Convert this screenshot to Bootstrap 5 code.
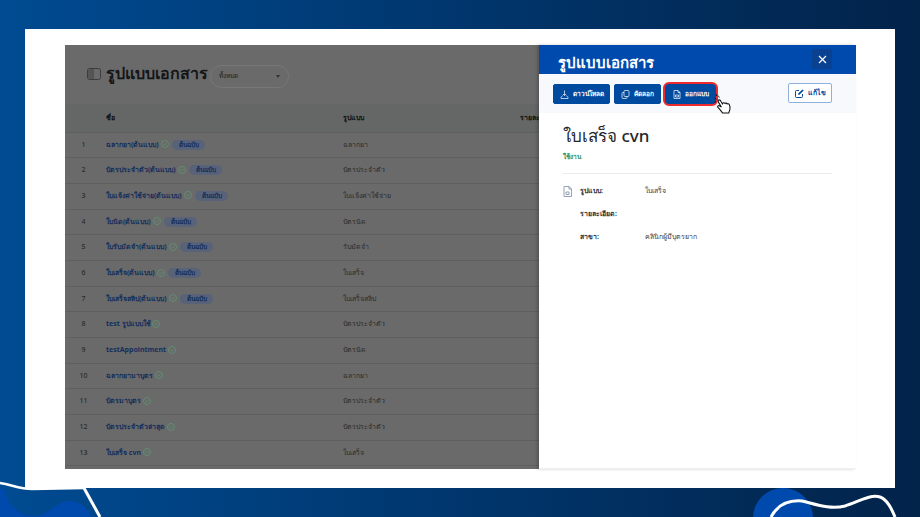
<!DOCTYPE html>
<html lang="th">
<head>
    <meta charset="UTF-8">
    <meta name="viewport" content="width=device-width, initial-scale=1">
    <title>รูปแบบเอกสาร</title>
    <link href="https://cdn.jsdelivr.net/npm/bootstrap@5.3.0/dist/css/bootstrap.min.css" rel="stylesheet">
    <style>
        html, body { height: 517px; overflow: hidden; }
        body {
            position: relative;
            padding: 29px 25px;
            font-family: "Noto Sans", Inter, "Liberation Sans", sans-serif;
            background: linear-gradient(to right, #004b92, #003a74 40%, #02234a);
        }
        .deco { position: absolute; left: 0; top: 0; }
        .sheet { position: relative; height: 459px; background: #fff; padding: 16px 39px 19px 40px; }
        .shot { height: 424px; }

        /* lista de fondo, oscurecida */
        .list-side { flex: 1 1 0; min-width: 0; overflow: hidden; background: #6a6a6a; }
        .list-head { height: 59px; padding: 0 0 1px 22px; gap: 5px; }
        .list-title { font-size: 16px; font-weight: 700; color: #141518; margin: 0; }
        .filter-box {
            width: 79px; height: 23px; padding: 0 8px; margin-top: 4px; margin-left: -3px;
            border: 1px solid #777; border-radius: 12px;
            font-size: 6.5px; color: #222;
        }
        .filter-caret { border: 2.5px solid transparent; border-top: 3px solid #333; border-bottom: 0; }
        .doc-table { table-layout: fixed; width: 791px; margin: 0; font-size: 7px; font-weight: 500; }
        .doc-table > * > tr > * { background: transparent; padding: 0; vertical-align: middle; border-color: #5f5f5f; color: #2a2a2a; box-shadow: none; }
        .doc-table thead th { height: 28px; background: #646765; font-weight: 700; color: #111; }
        .doc-table tbody td { height: 25.7px; }
        .doc-table tbody td.doc-name-cell { white-space: nowrap; }
        .doc-name { color: #152f5c; font-weight: 700; }
        .doc-check { width: 8px; height: 8px; margin: 0 2px 0 0; vertical-align: -1.500px; }
        .doc-badge { display: inline-block; width: 33px; line-height: 10px; border-radius: 5px; background: #586379; color: #152f5c; font-size: 6.5px; font-weight: 700; text-align: center; }

        /* panel derecho */
        .drawer { flex: 0 0 317px; background: #fff; border-bottom: 1px solid #eef0f4; box-shadow: -2px 0 3px rgba(0,0,0,.2); position: relative; }
        .drawer-top { height: 29px; background: #004aad; padding: 0 24px 0 19px; }
        .drawer-title { font-size: 15px; font-weight: 600; color: #fff; margin: 5px 0 0; }
        .drawer-close { width: 20px; height: 20px; background: #0a4191; border-radius: 2px; margin-top: -1px; }
        .drawer-tools { height: 39px; background: #f7f9fc; padding: 0 24px 0 14px; }
        .tool-btn {
            height: 20px; padding: 0; gap: 4px;
            background: #004a9f; border: 1px solid #004a9f; border-radius: 2px;
            color: #fff; font-size: 6.5px; font-weight: 700; line-height: 1;
        }
        .tool-download { width: 57px; }
        .tool-copy { width: 47px; }
        .tool-export { position: relative; width: 51px; }
        .tool-export::after { content: ""; position: absolute; inset: -3px; border: 2px solid #ee2a2e; border-radius: 6px; }
        .tool-gap { gap: 4px; margin-top: 1px; }
        .tool-edit { height: 20px; width: 44px; padding: 0; gap: 4px; background: #fff; border: 1px solid #8fb0dd; border-radius: 2px; color: #004a9f; font-size: 7px; font-weight: 700; margin-top: -1px; }
        .hand { position: absolute; left: 47px; top: 9px; width: 21px; height: 21px; z-index: 3; }
        .drawer-body { padding: 12px 24px 0; }
        .doc-title { font-size: 17px; font-weight: 500; color: #24272b; margin: 0; line-height: 22px; }
        .doc-state { font-size: 6.5px; font-weight: 700; color: #2f9155; margin-top: 5px; line-height: 10px; }
        .doc-rule { margin: 11px 0 0; border-color: #e9ebef; opacity: 1; }
        .doc-info { margin-top: 6px; }
        .doc-info-row { height: 23px; font-size: 7px; color: #3a3d42; }
        .doc-icon-cell { width: 17px; }
        .doc-info-label { width: 65px; font-weight: 700; color: #33363b; }
    </style>
</head>
<body>

<!-- adornos del fondo -->
<svg class="deco" width="920" height="517" viewBox="0 0 920 517">
    <path d="M4 489 C8 505 18 516 34 516 C48 516 56 502 68 501 C78 500 86 506 92 517 L0 517 L0 489Z" fill="#004aad"/>
    <path d="M0 483 C12 485 20 489 32 489 L84 488" fill="none" stroke="#fff" stroke-width="2.5"/>
    <path d="M84 488 L100 517" fill="none" stroke="#fff" stroke-width="3"/>
    <circle cx="783" cy="518" r="30" fill="#004aad"/>
    <path d="M771 517 C778 504 790 500 802 501 C815 504 830 510 845 506 C858 502 870 494 880 497 C888 500 892 510 895 517" fill="none" stroke="#fff" stroke-width="3"/>
</svg>

<div class="sheet">
    <div class="shot d-flex">
        <div class="list-side">
            <div class="list-head d-flex align-items-center">
                <svg width="14" height="12" viewBox="0 0 14 12" fill="none" stroke="#3a3c3f"><rect x=".5" y=".5" width="13" height="11" rx="2"/><path d="M6 .5v11"/><rect x="1" y="1" width="4.500" height="10" fill="#555" stroke="none"/></svg>
                <h1 class="list-title">รูปแบบเอกสาร</h1>
                <div class="filter-box d-flex align-items-center justify-content-between"><span>ทั้งหมด</span><span class="filter-caret"></span></div>
            </div>
            <table class="table doc-table">
                <colgroup><col style="width:41px"><col style="width:237px"><col style="width:177px"><col></colgroup>
                <thead><tr><th></th><th>ชื่อ</th><th>รูปแบบ</th><th>รายละเอียด</th></tr></thead>
                <tbody>
                    <tr><td class="text-center pe-1">1</td><td class="doc-name-cell"><span class="doc-name">ฉลากยา(ต้นแบบ)</span> <svg class="doc-check" viewBox="0 0 8 8" fill="none" stroke="#5f9573" stroke-width=".8"><circle cx="4" cy="4" r="3.5"/><path d="M2.400 4l1.100 1.100 2.100-2.100"/></svg> <span class="doc-badge">ต้นฉบับ</span></td><td>ฉลากยา</td><td></td></tr>
                    <tr><td class="text-center pe-1">2</td><td class="doc-name-cell"><span class="doc-name">บัตรประจำตัว(ต้นแบบ)</span> <svg class="doc-check" viewBox="0 0 8 8" fill="none" stroke="#5f9573" stroke-width=".8"><circle cx="4" cy="4" r="3.5"/><path d="M2.400 4l1.100 1.100 2.100-2.100"/></svg> <span class="doc-badge">ต้นฉบับ</span></td><td>บัตรประจำตัว</td><td></td></tr>
                    <tr><td class="text-center pe-1">3</td><td class="doc-name-cell"><span class="doc-name">ใบแจ้งค่าใช้จ่าย(ต้นแบบ)</span> <svg class="doc-check" viewBox="0 0 8 8" fill="none" stroke="#5f9573" stroke-width=".8"><circle cx="4" cy="4" r="3.5"/><path d="M2.400 4l1.100 1.100 2.100-2.100"/></svg> <span class="doc-badge">ต้นฉบับ</span></td><td>ใบแจ้งค่าใช้จ่าย</td><td></td></tr>
                    <tr><td class="text-center pe-1">4</td><td class="doc-name-cell"><span class="doc-name">ใบนัด(ต้นแบบ)</span> <svg class="doc-check" viewBox="0 0 8 8" fill="none" stroke="#5f9573" stroke-width=".8"><circle cx="4" cy="4" r="3.5"/><path d="M2.400 4l1.100 1.100 2.100-2.100"/></svg> <span class="doc-badge">ต้นฉบับ</span></td><td>บัตรนัด</td><td></td></tr>
                    <tr><td class="text-center pe-1">5</td><td class="doc-name-cell"><span class="doc-name">ใบรับมัดจำ(ต้นแบบ)</span> <svg class="doc-check" viewBox="0 0 8 8" fill="none" stroke="#5f9573" stroke-width=".8"><circle cx="4" cy="4" r="3.5"/><path d="M2.400 4l1.100 1.100 2.100-2.100"/></svg> <span class="doc-badge">ต้นฉบับ</span></td><td>รับมัดจำ</td><td></td></tr>
                    <tr><td class="text-center pe-1">6</td><td class="doc-name-cell"><span class="doc-name">ใบเสร็จ(ต้นแบบ)</span> <svg class="doc-check" viewBox="0 0 8 8" fill="none" stroke="#5f9573" stroke-width=".8"><circle cx="4" cy="4" r="3.5"/><path d="M2.400 4l1.100 1.100 2.100-2.100"/></svg> <span class="doc-badge">ต้นฉบับ</span></td><td>ใบเสร็จ</td><td></td></tr>
                    <tr><td class="text-center pe-1">7</td><td class="doc-name-cell"><span class="doc-name">ใบเสร็จสลิป(ต้นแบบ)</span> <svg class="doc-check" viewBox="0 0 8 8" fill="none" stroke="#5f9573" stroke-width=".8"><circle cx="4" cy="4" r="3.5"/><path d="M2.400 4l1.100 1.100 2.100-2.100"/></svg> <span class="doc-badge">ต้นฉบับ</span></td><td>ใบเสร็จสลิป</td><td></td></tr>
                    <tr><td class="text-center pe-1">8</td><td class="doc-name-cell"><span class="doc-name">test รูปแบบใช้</span> <svg class="doc-check" viewBox="0 0 8 8" fill="none" stroke="#5f9573" stroke-width=".8"><circle cx="4" cy="4" r="3.5"/><path d="M2.400 4l1.100 1.100 2.100-2.100"/></svg></td><td>บัตรประจำตัว</td><td></td></tr>
                    <tr><td class="text-center pe-1">9</td><td class="doc-name-cell"><span class="doc-name">testAppointment</span> <svg class="doc-check" viewBox="0 0 8 8" fill="none" stroke="#5f9573" stroke-width=".8"><circle cx="4" cy="4" r="3.5"/><path d="M2.400 4l1.100 1.100 2.100-2.100"/></svg></td><td>บัตรนัด</td><td></td></tr>
                    <tr><td class="text-center pe-1">10</td><td class="doc-name-cell"><span class="doc-name">ฉลากยามาบุตร</span> <svg class="doc-check" viewBox="0 0 8 8" fill="none" stroke="#5f9573" stroke-width=".8"><circle cx="4" cy="4" r="3.5"/><path d="M2.400 4l1.100 1.100 2.100-2.100"/></svg></td><td>ฉลากยา</td><td></td></tr>
                    <tr><td class="text-center pe-1">11</td><td class="doc-name-cell"><span class="doc-name">บัตรมาบุตร</span> <svg class="doc-check" viewBox="0 0 8 8" fill="none" stroke="#5f9573" stroke-width=".8"><circle cx="4" cy="4" r="3.5"/><path d="M2.400 4l1.100 1.100 2.100-2.100"/></svg></td><td>บัตรประจำตัว</td><td></td></tr>
                    <tr><td class="text-center pe-1">12</td><td class="doc-name-cell"><span class="doc-name">บัตรประจำตัวล่าสุด</span> <svg class="doc-check" viewBox="0 0 8 8" fill="none" stroke="#5f9573" stroke-width=".8"><circle cx="4" cy="4" r="3.5"/><path d="M2.400 4l1.100 1.100 2.100-2.100"/></svg></td><td>บัตรประจำตัว</td><td></td></tr>
                    <tr><td class="text-center pe-1">13</td><td class="doc-name-cell"><span class="doc-name">ใบเสร็จ cvn</span> <svg class="doc-check" viewBox="0 0 8 8" fill="none" stroke="#5f9573" stroke-width=".8"><circle cx="4" cy="4" r="3.5"/><path d="M2.400 4l1.100 1.100 2.100-2.100"/></svg></td><td>ใบเสร็จ</td><td></td></tr>
                </tbody>
            </table>
        </div>

        <div class="drawer">
            <div class="drawer-top d-flex align-items-center justify-content-between">
                <h2 class="drawer-title">รูปแบบเอกสาร</h2>
                <div class="drawer-close d-flex align-items-center justify-content-center">
                    <svg width="9" height="9" viewBox="0 0 9 9" stroke="#fff" stroke-width="1.2"><path d="M1 1l7 7M8 1l-7 7"/></svg>
                </div>
            </div>
            <div class="drawer-tools d-flex align-items-center justify-content-between">
                <div class="tool-gap d-flex">
                    <button class="tool-btn tool-download d-flex align-items-center justify-content-center" type="button">
                        <svg width="9" height="9" viewBox="0 0 9 9" fill="none" stroke="#fff" stroke-width=".7"><path d="M4.500 .5v5M3 4l1.500 1.500L6 4M2.500 5.500 1 7.500v1h7v-1L6.500 5.500"/></svg>ดาวน์โหลด
                    </button>
                    <button class="tool-btn tool-copy d-flex align-items-center justify-content-center" type="button">
                        <svg width="9" height="9" viewBox="0 0 9 9" fill="none" stroke="#fff" stroke-width=".7"><rect x="3" y=".5" width="5" height="6" rx="1"/><path d="M3 2.500H2a1 1 0 0 0-1 1v4a1 1 0 0 0 1 1h3a1 1 0 0 0 1-1V6.500"/></svg>คัดลอก
                    </button>
                    <button class="tool-btn tool-export d-flex align-items-center justify-content-center" type="button">
                        <svg width="8" height="9" viewBox="0 0 8 9" fill="none" stroke="#fff" stroke-width=".7"><path d="M1 .5h4l2 2v6H1zM5 .5v2h2M2.500 5h3v2h-3z"/></svg>ออกแบบ
                        <svg class="hand" viewBox="0 0 20 20"><path d="M5 1.500l1 2M1.500 4l2 1M1 8l2-.5M3 0l.5 2" stroke="#111" stroke-width=".8" fill="none"/><path d="M5 6c1-1 2 0 2.500 1L9 9.500l.5-1c1-.5 1.500 0 2 .5.500-.5 1.500-.5 2 .5.500-.5 1.500-.3 2 .5.800 1.500 1 3 .5 5l-1 3H9c-1-1.500-3-4-4.500-5.500-.5-1 .5-2 2-1L8 12.500 5 7.500z" fill="#fff" stroke="#111" stroke-width="1"/></svg>
                    </button>
                </div>
                <button class="tool-edit d-flex align-items-center justify-content-center" type="button">
                    <svg width="9" height="9" viewBox="0 0 9 9" fill="none" stroke="#004a9f" stroke-width="1"><path d="M4 1.500H1.500a1 1 0 0 0-1 1v5a1 1 0 0 0 1 1h5a1 1 0 0 0 1-1V5"/><path d="M3.500 5.500V4.500L7.500.8l.8.8-4 3.900z" fill="#004a9f" stroke-width=".6"/></svg>แก้ไข
                </button>
            </div>
            <div class="drawer-body">
                <h3 class="doc-title">ใบเสร็จ cvn</h3>
                <div class="doc-state">ใช้งาน</div>
                <hr class="doc-rule">
                <div class="doc-info">
                    <div class="doc-info-row d-flex align-items-center">
                        <div class="doc-icon-cell">
                            <svg width="9" height="11" viewBox="0 0 9 11" fill="none" stroke="#7c8ba5" stroke-width=".8"><path d="M1 .5h5l2.500 2.500v7.500H1zM6 .5V3h2.500M3 6h3v2.500H3z"/></svg>
                        </div>
                        <div class="doc-info-label">รูปแบบ:</div><div>ใบเสร็จ</div>
                    </div>
                    <div class="doc-info-row d-flex align-items-center">
                        <div class="doc-icon-cell"></div>
                        <div class="doc-info-label">รายละเอียด:</div>
                    </div>
                    <div class="doc-info-row d-flex align-items-center">
                        <div class="doc-icon-cell"></div>
                        <div class="doc-info-label">สาขา:</div><div>คลินิกผู้มีบุตรยาก</div>
                    </div>
                </div>
            </div>
        </div>
    </div>
</div>

<script src="https://cdn.jsdelivr.net/npm/bootstrap@5.3.0/dist/js/bootstrap.bundle.min.js"></script>
</body>
</html>
